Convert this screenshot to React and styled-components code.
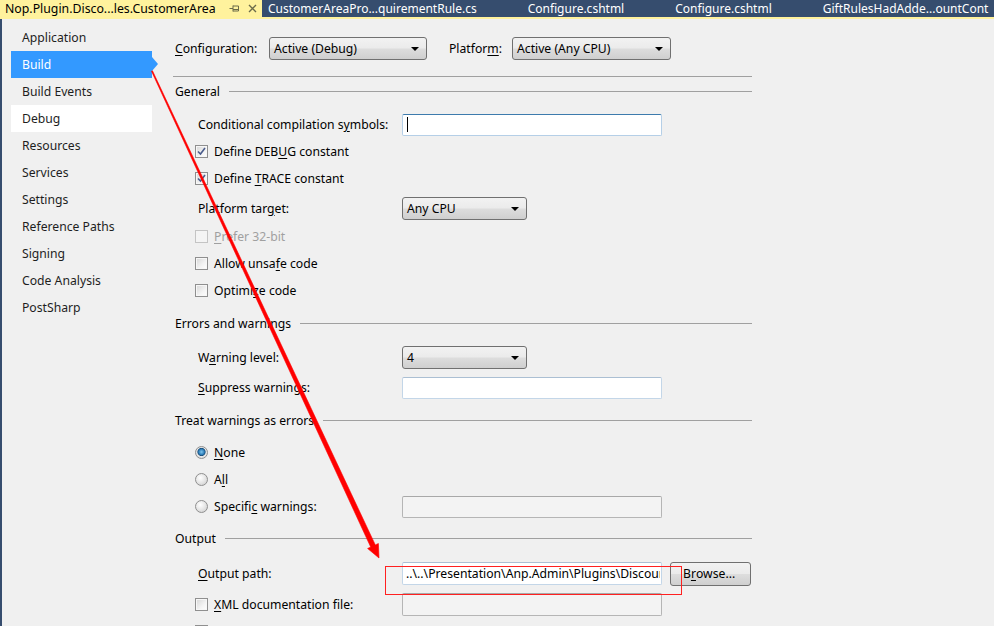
import React from 'react';
import styled, { createGlobalStyle } from 'styled-components';

const GlobalStyle = createGlobalStyle`
  html, body {
    margin: 0;
    padding: 0;
    background: #f0f0f0;
    overflow: hidden;
  }
  * { box-sizing: border-box; }
`;

const FONT = `'Noto Sans', 'Open Sans', Arial, sans-serif`;

const Page = styled.div`
  position: relative;
  width: 994px;
  height: 626px;
  overflow: hidden;
  background: #f0f0f0;
  font-family: ${FONT};
  font-size: 12.2px;
  color: #000;
  display: flex;
  flex-direction: column;
`;

const TabBar = styled.div`
  display: flex;
  flex-shrink: 0;
  height: 17px;
  background: #364d6e;
  border-bottom: 2px solid #fff29d;
  box-sizing: content-box;
  white-space: nowrap;
  overflow: hidden;
`;

const Tab = styled.div`
  display: flex;
  align-items: center;
  height: 17px;
  width: ${(p) => (p.$active ? '262px' : 'auto')};
  padding: ${(p) => (p.$active ? '0 5px 0 5px' : '0 45px 0 6px')};
  background: ${(p) => (p.$active ? '#fff29d' : 'transparent')};
  color: ${(p) => (p.$active ? '#000' : '#fff')};
  font-size: ${(p) => (p.$active ? '12.3px' : '12px')};
  flex-shrink: 0;
`;

const TabIcons = styled.span`
  display: flex;
  align-items: center;
  gap: 8px;
  margin-left: auto;
`;

const Body = styled.div`
  flex: 1;
  min-height: 0;
  overflow: hidden;
  display: flex;
  border-left: 2px solid #364d6e;
`;

const Sidebar = styled.nav`
  width: 171px;
  padding: 5px 0 0 9px;
  display: flex;
  flex-direction: column;
`;

const NavItem = styled.div`
  position: relative;
  width: 141px;
  height: 27px;
  display: flex;
  align-items: center;
  padding-left: 11px;
  color: ${(p) => (p.$selected ? '#fff' : '#1e1e1e')};
  background: ${(p) => (p.$selected ? '#3399ff' : p.$hover ? '#fff' : 'transparent')};

  ${(p) =>
    p.$selected &&
    `
    &::after {
      content: '';
      position: absolute;
      right: -6px;
      top: 6px;
      border-top: 7px solid transparent;
      border-bottom: 7px solid transparent;
      border-left: 6px solid #3399ff;
    }
  `}
`;

const Content = styled.main`
  width: 579px;
  padding-top: 18px;
  display: flex;
  flex-direction: column;
  flex-shrink: 0;
`;

const ConfigRow = styled.div`
  display: flex;
  align-items: center;
  flex-shrink: 0;
  height: 23px;
  padding-left: 2px;
`;

const ConfigLabel = styled.span`
  width: ${(p) => p.$w}px;
  margin-left: ${(p) => p.$ml || 0}px;
`;

const Separator = styled.div`
  height: 1px;
  flex-shrink: 0;
  background: #a0a0a0;
  margin-top: 16px;
`;

const Row = styled.div`
  display: flex;
  align-items: center;
  flex-shrink: 0;
  height: 27px;
  margin-top: ${(p) => p.$mt || 0}px;
  padding-left: ${(p) => (p.$check ? 22 : 25)}px;
  color: ${(p) => (p.$disabled ? '#a0a0a0' : '#000')};
`;

const Header = styled.div`
  display: flex;
  align-items: center;
  flex-shrink: 0;
  height: 27px;
  margin-top: ${(p) => p.$mt || 0}px;
  padding-left: 2px;
  gap: 9px;

  &::after {
    content: '';
    flex: 1;
    height: 1px;
    background: #a0a0a0;
  }
`;

const Label = styled.span`
  width: ${(p) => (p.$check ? 188 : 204)}px;
  flex-shrink: 0;
  white-space: pre;
`;

const U = styled.span`
  text-decoration: underline;
  text-underline-offset: 2px;
`;

const SelectBox = styled.div`
  position: relative;
  width: ${(p) => p.$w}px;
  height: 23px;
  border: 1px solid #707070;
  border-radius: 3px;
  background: linear-gradient(#f2f2f2 0%, #ebebeb 48%, #dddddd 52%, #cfcfcf 100%);
  display: flex;
  align-items: center;
  padding-left: 4px;
  flex-shrink: 0;

  &::after {
    content: '';
    position: absolute;
    right: 7px;
    top: 9px;
    border-left: 4px solid transparent;
    border-right: 4px solid transparent;
    border-top: 4px solid #000;
  }
`;

const TextBox = styled.div`
  width: 260px;
  height: ${(p) => (p.$tall ? 23 : 22)}px;
  flex-shrink: 0;
  display: flex;
  align-items: center;
  padding-left: 3px;
  overflow: hidden;
  background: ${(p) => (p.$disabled ? '#f3f3f3' : '#fff')};
  border: 1px solid ${(p) => (p.$disabled ? '#b5b5b5' : p.$focus ? '#b5cfe7' : '#c3d6e8')};
  border-top-color: ${(p) => (p.$disabled ? '#a8a8a8' : p.$focus ? '#3d7bad' : '#abbfd3')};
  border-radius: 2px;
`;

const BoxText = styled.span`
  display: block;
  width: 254px;
  overflow: hidden;
  white-space: nowrap;
`;

const Caret = styled.span`
  width: 1px;
  height: 15px;
  background: #000;
  margin-left: 1px;
`;

const Button = styled.div`
  width: 81px;
  height: 24px;
  margin-left: 8px;
  border: 1px solid #707070;
  border-radius: 3px;
  background: linear-gradient(#f2f2f2 0%, #ebebeb 48%, #dddddd 52%, #cfcfcf 100%);
  display: flex;
  align-items: center;
  padding-left: 12px;
`;

const Box = styled.span`
  position: relative;
  width: 13px;
  height: 13px;
  margin-right: 6px;
  flex-shrink: 0;
  border: 1px solid ${(p) => (p.$disabled ? '#c4c4c4' : '#8f8f8f')};
  background: ${(p) =>
    p.$disabled ? '#f4f4f4' : 'linear-gradient(135deg, #d6d6d6 0%, #f3f3f3 60%, #ffffff 100%)'};
  box-shadow: inset 0 0 0 1px ${(p) => (p.$disabled ? '#f4f4f4' : '#f7f7f7')};
  display: flex;
  align-items: center;
  justify-content: center;
`;

const Radio = styled.span`
  width: 13px;
  height: 13px;
  margin-right: 6px;
  border-radius: 50%;
  flex-shrink: 0;
  border: 1px solid #8f8f8f;
  background: ${(p) =>
    p.$checked
      ? 'radial-gradient(circle at 50% 45%, #7fc6ef 0%, #2a7ab5 35%, #1b4f7b 45%, #e8e8e8 55%, #d0d0d0 100%)'
      : 'radial-gradient(circle at 40% 35%, #ffffff 0%, #e6e6e6 50%, #c8c8c8 100%)'};
`;

const Overlay = styled.svg`
  position: absolute;
  left: 0;
  top: 0;
  pointer-events: none;
`;

const Highlight = styled.div`
  position: absolute;
  left: 385px;
  top: 566px;
  width: 297px;
  height: 29px;
  border: 1px solid #ff2020;
  pointer-events: none;
`;

function Check({ checked, disabled }) {
  return (
    <Box $disabled={disabled}>
      {checked && (
        <svg width="9" height="9" viewBox="0 0 9 9">
          <path d="M1 4.5 L3.5 7 L8 1" fill="none" stroke="#4a5c8c" strokeWidth="1.6" />
        </svg>
      )}
    </Box>
  );
}

const navItems = [
  'Application',
  'Build',
  'Build Events',
  'Debug',
  'Resources',
  'Services',
  'Settings',
  'Reference Paths',
  'Signing',
  'Code Analysis',
  'PostSharp',
];

const tabs = [
  'CustomerAreaPro...quirementRule.cs',
  'Configure.cshtml',
  'Configure.cshtml',
  'GiftRulesHadAdde...ountCont',
];

export default function App() {
  return (
    <Page>
      <GlobalStyle />
      <TabBar>
        <Tab $active>
          Nop.Plugin.Disco...les.CustomerArea
          <TabIcons>
            <svg width="11" height="9" viewBox="0 0 11 9">
              <path d="M0.5 4.5 H4 M4 1.5 V7.5 M4 2 H9.5 V7 H4 M4 5.5 H9.5" fill="none" stroke="#6b6b4a" strokeWidth="1" />
            </svg>
            <svg width="9" height="9" viewBox="0 0 9 9">
              <path d="M1 1 L8 8 M8 1 L1 8" stroke="#6b6b4a" strokeWidth="1.4" />
            </svg>
          </TabIcons>
        </Tab>
        {tabs.map((t, i) => (
          <Tab key={i}>{t}</Tab>
        ))}
      </TabBar>
      <Body>
        <Sidebar>
          {navItems.map((n) => (
            <NavItem key={n} $selected={n === 'Build'} $hover={n === 'Debug'}>
              {n}
            </NavItem>
          ))}
        </Sidebar>
        <Content>
          <ConfigRow>
            <ConfigLabel $w={94}>
              <U>C</U>onfiguration:
            </ConfigLabel>
            <SelectBox $w={158}>Active (Debug)</SelectBox>
            <ConfigLabel $w={63} $ml={22}>
              Platfor<U>m</U>:
            </ConfigLabel>
            <SelectBox $w={159}>Active (Any CPU)</SelectBox>
          </ConfigRow>
          <Separator />

          <Header $mt={1}>General</Header>
          <Row $mt={6}>
            <Label>
              Conditional compilation s<U>y</U>mbols:
            </Label>
            <TextBox $focus>
              <Caret />
            </TextBox>
          </Row>
          <Row $check>
            <Check checked />
            <Label $check>
              Define DEB<U>U</U>G constant
            </Label>
          </Row>
          <Row $check>
            <Check checked />
            <Label $check>
              Define <U>T</U>RACE constant
            </Label>
          </Row>
          <Row $mt={3}>
            <Label>
              Platform tar<U>g</U>et:
            </Label>
            <SelectBox $w={125}>Any CPU</SelectBox>
          </Row>
          <Row $check $mt={1} $disabled>
            <Check disabled />
            <U>P</U>refer 32-bit
          </Row>
          <Row $check>
            <Check />
            Allow unsa<U>f</U>e code
          </Row>
          <Row $check>
            <Check />
            Optimi<U>z</U>e code
          </Row>

          <Header $mt={6}>Errors and warnings</Header>
          <Row $mt={7}>
            <Label>
              W<U>a</U>rning level:
            </Label>
            <SelectBox $w={125}>4</SelectBox>
          </Row>
          <Row $mt={3}>
            <Label>
              <U>S</U>uppress warnings:
            </Label>
            <TextBox />
          </Row>

          <Header $mt={6}>Treat warnings as errors</Header>
          <Row $check $mt={5}>
            <Radio $checked />
            <U>N</U>one
          </Row>
          <Row $check>
            <Radio />
            A<U>l</U>l
          </Row>
          <Row $check>
            <Radio />
            <Label $check>
              Specifi<U>c</U> warnings:
            </Label>
            <TextBox $disabled />
          </Row>

          <Header $mt={5}>Output</Header>
          <Row $mt={8}>
            <Label>
              <U>O</U>utput path:
            </Label>
            <TextBox $tall>
              <BoxText>..\..\Presentation\Anp.Admin\Plugins\Discour</BoxText>
            </TextBox>
            <Button>
              B<U>r</U>owse...
            </Button>
          </Row>
          <Row $check $mt={4}>
            <Check />
            <Label $check>
              <U>X</U>ML documentation file:
            </Label>
            <TextBox $disabled $tall />
          </Row>
          <Row $check>
            <Check />
          </Row>
        </Content>
      </Body>

      <Overlay width="994" height="626" viewBox="0 0 994 626">
        <polygon
          points="151.5,71.2 370.7,547.1 367.6,548.5 379,558 378.4,543.5 375.3,544.9 152.5,70.8"
          fill="#ff0000"
          stroke="#ff0000"
          strokeWidth="0.6"
          strokeLinejoin="round"
        />
      </Overlay>
      <Highlight />
    </Page>
  );
}
